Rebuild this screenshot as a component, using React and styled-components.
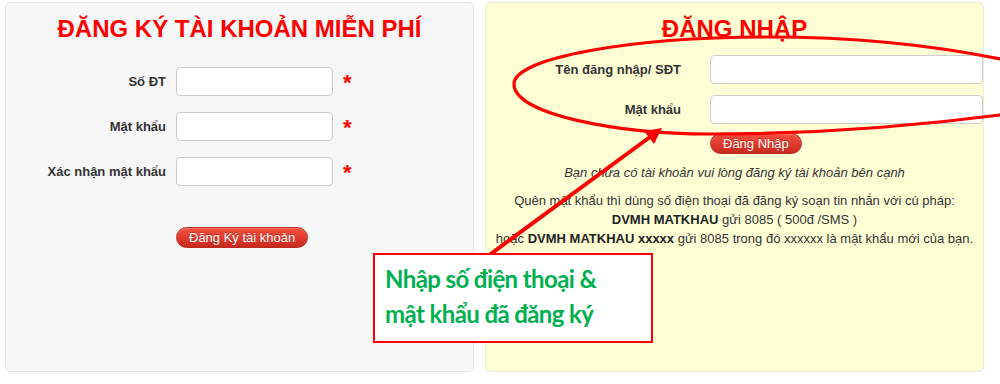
import React from "react";
import styled, { createGlobalStyle } from "styled-components";

const GlobalStyle = createGlobalStyle`
  html, body { margin: 0; padding: 0; background: #fff; }
  body {
    font-family: "Liberation Sans", Arial, sans-serif;
    font-size: 13px;
    color: #333;
  }
`;

const Page = styled.div`
  position: relative;
  width: 1000px;
  height: 384px;
  box-sizing: border-box;
  padding: 2px 0 0 5px;
  display: flex;
  gap: 11px;
  align-items: flex-start;
  overflow: hidden;
`;

const Panel = styled.section`
  box-sizing: border-box;
  width: ${(p) => p.$w}px;
  height: 370px;
  background: ${(p) => p.$bg};
  border: 1px solid ${(p) => p.$border};
  border-radius: 5px;
  padding-top: 12px;
  display: flex;
  flex-direction: column;
`;

const Title = styled.h2`
  margin: 0;
  text-align: center;
  font-size: 24px;
  line-height: 28px;
  font-weight: bold;
  color: #f00;
`;

const FormGrid = styled.div`
  display: grid;
  grid-template-columns: ${(p) => p.$cols};
  column-gap: ${(p) => p.$gap}px;
  row-gap: ${(p) => p.$rowGap}px;
  align-items: center;
  margin-top: ${(p) => p.$mt}px;
`;

const Label = styled.label`
  text-align: right;
  font-weight: bold;
  font-size: 13px;
  color: #333;
  white-space: nowrap;
`;

const Input = styled.input`
  box-sizing: border-box;
  height: 29px;
  width: 100%;
  margin: 0;
  border: 1px solid #ccc;
  border-radius: 4px;
  background: #fff;
  padding: 4px 8px;
  font: inherit;
`;

const Required = styled.span`
  color: #f00;
  font-weight: bold;
  font-size: 22px;
  line-height: 22px;
  margin-top: 3px;
`;

const Button = styled.button`
  align-self: flex-start;
  box-sizing: border-box;
  height: 21px;
  padding: 0 12px;
  margin: ${(p) => p.$mt}px 0 0 ${(p) => p.$ml}px;
  border-radius: 11px;
  border: 1px solid #bb2a1f;
  background: linear-gradient(#f4503f, #c8291d);
  color: #fff;
  font-family: "Liberation Sans", Arial, sans-serif;
  font-size: 13px;
  line-height: 19px;
  text-shadow: 0 -1px 0 rgba(120, 0, 0, 0.35);
  box-shadow: inset 0 1px 0 rgba(255, 255, 255, 0.25);
  cursor: pointer;
`;

const Info = styled.p`
  margin: 9px 0 0;
  text-align: center;
  font-size: 13px;
  line-height: 19px;
  font-style: ${(p) => (p.$italic ? "italic" : "normal")};
  color: #333;
`;

const Strong = styled.b`
  color: #222;
`;

const Overlay = styled.svg`
  position: absolute;
  left: 0;
  top: 0;
  width: 1000px;
  height: 384px;
  pointer-events: none;
  overflow: visible;
`;

const Callout = styled.div`
  position: absolute;
  left: 373px;
  top: 253px;
  width: 280px;
  height: 90px;
  box-sizing: border-box;
  border: 2px solid #f00;
  background: #fff;
  padding: 6px 0 0 10px;
  font-family: Lato, "Open Sans", sans-serif;
  font-weight: 700;
  font-size: 24px;
  letter-spacing: -0.6px;
  line-height: 35px;
  color: #00b050;
  white-space: nowrap;
`;

export default function App() {
  return (
    <>
      <GlobalStyle />
      <Page>
        <Panel $w={469} $bg="#f7f7f7" $border="#e6e6e6">
          <Title>ĐĂNG KÝ TÀI KHOẢN MIỄN PHÍ</Title>
          <FormGrid $cols="160px 157px 20px" $gap={10} $rowGap={16} $mt={24}>
            <Label>Số ĐT</Label>
            <Input type="text" />
            <Required>*</Required>
            <Label>Mật khẩu</Label>
            <Input type="password" />
            <Required>*</Required>
            <Label>Xác nhận mật khẩu</Label>
            <Input type="password" />
            <Required>*</Required>
          </FormGrid>
          <Button $mt={41} $ml={170}>Đăng Ký tài khoản</Button>
        </Panel>

        <Panel $w={499} $bg="#ffffd5" $border="#ececd8">
          <Title>ĐĂNG NHẬP</Title>
          <FormGrid $cols="195px 273px" $gap={29} $rowGap={11} $mt={12}>
            <Label>Tên đăng nhập/ SĐT</Label>
            <Input type="text" />
            <Label>Mật khẩu</Label>
            <Input type="password" />
          </FormGrid>
          <Button $mt={9} $ml={224}>Đăng Nhập</Button>
          <Info $italic>Bạn chưa có tài khoản vui lòng đăng ký tài khoản bên cạnh</Info>
          <Info>
            Quên mật khẩu thì dùng số điện thoại đã đăng ký soạn tin nhắn với cú pháp:
            <br />
            <Strong>DVMH MATKHAU</Strong> gửi 8085 ( 500đ /SMS )
            <br />
            hoặc <Strong>DVMH MATKHAU xxxxx</Strong> gửi 8085 trong đó xxxxxx là mật khẩu mới của bạn.
          </Info>
        </Panel>

        <Overlay viewBox="0 0 1000 384">
          <path
            d="M514,84 C514,58 630,37 767,37 C870,37 960,48 1040,68 C1100,83 1090,105 1000,115 C900,128 800,134 710,134 C620,134 514,115 514,84 Z"
            fill="none"
            stroke="#ff0000"
            strokeWidth="3.2"
          />
          <line x1="488" y1="256" x2="650" y2="137" stroke="#ff0000" strokeWidth="4" />
          <polygon points="662,128 654,144 644,131" fill="#ff0000" />
        </Overlay>
        <Callout>
          Nhập số điện thoại &amp;
          <br />
          mật khẩu đã đăng ký
        </Callout>
      </Page>
    </>
  );
}
